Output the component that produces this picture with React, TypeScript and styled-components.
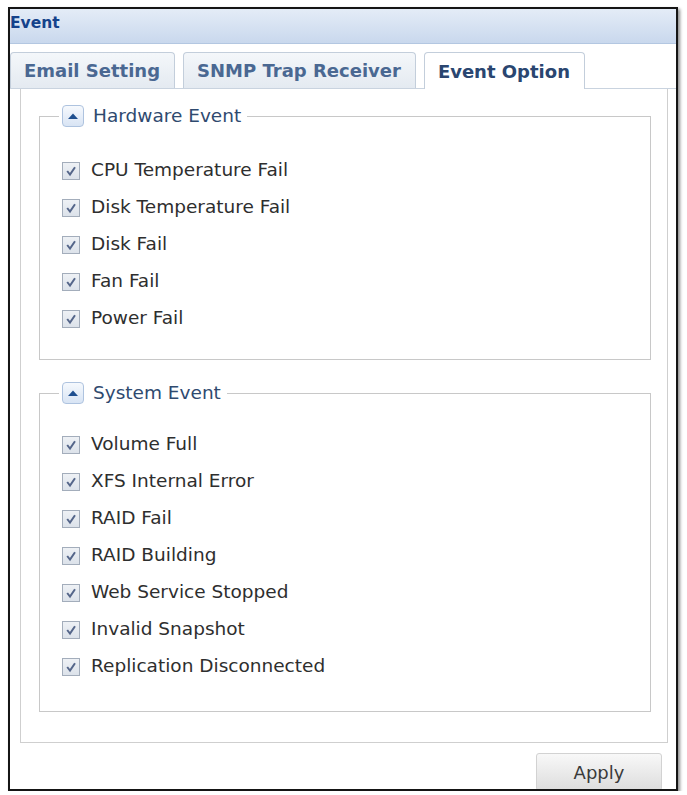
import * as React from "react";
import styled, { createGlobalStyle } from "styled-components";

const GlobalStyle = createGlobalStyle`
  *, *::before, *::after {
    box-sizing: border-box;
  }
  html, body {
    margin: 0;
    padding: 0;
    background: #ffffff;
  }
`;

const Window = styled.div`
  margin: 7px 0 0 8px;
  width: 670px;
  height: 784px;
  border: 2px solid #151515;
  box-shadow: 2px 2px 3px rgba(0, 0, 0, 0.45);
  background: #ffffff;
  display: flex;
  flex-direction: column;
  overflow: hidden;
  font-family: "DejaVu Sans", Verdana, sans-serif;
`;

const TitleBar = styled.div`
  height: 35px;
  flex: none;
  padding: 4px 0 0 0;
  line-height: 20px;
  font-size: 15.5px;
  font-weight: bold;
  color: #15428b;
  background: linear-gradient(#e4ecf7, #c9d8ed);
  border-bottom: 1px solid #b3c7e1;
`;

const TabStrip = styled.div`
  flex: none;
  display: flex;
  align-items: flex-end;
  gap: 8px;
  height: 45px;
  border-bottom: 1px solid #c9d3df;
`;

const Tab = styled.div<{ $active?: boolean }>`
  display: flex;
  align-items: center;
  padding: 0 14px 0 13px;
  font-size: 18px;
  font-weight: bold;
  color: ${(p) => (p.$active ? "#2a4670" : "#4a6892")};
  background: ${(p) =>
    p.$active ? "#ffffff" : "linear-gradient(#f4f7fa, #e4eaf1)"};
  border: 1px solid #c3cedb;
  border-bottom: none;
  border-radius: 4px 4px 0 0;
  margin-bottom: ${(p) => (p.$active ? "-1px" : "0")};
  height: ${(p) => (p.$active ? "37px" : "36px")};
`;

const Body = styled.div`
  flex: 1;
  display: flex;
  flex-direction: column;
  padding: 0 8px 0 10px;
`;

const Panel = styled.div`
  flex: none;
  height: 654px;
  border: 1px solid #cfcfcf;
  border-top: none;
  padding: 16px 16px 0 18px;
  display: flex;
  flex-direction: column;
  gap: 22px;
`;

const Group = styled.fieldset<{ $height: number; $top: number }>`
  margin: 0;
  min-width: 0;
  height: ${(p) => p.$height}px;
  border: 1px solid #c8c8c8;
  padding: ${(p) => p.$top}px 0 0 22px;
  display: flex;
  flex-direction: column;
  gap: 15px;
`;

const Legend = styled.legend`
  margin-left: -3px;
  padding: 0 6px 0 3px;
  display: flex;
  align-items: center;
  gap: 9px;
  font-size: 18.5px;
  line-height: 22px;
  color: #2f4a6f;
`;

const Toggle = styled.span`
  width: 22px;
  height: 22px;
  border: 1px solid #aec3df;
  border-radius: 4px;
  background: linear-gradient(#f6f9fd, #d8e4f4);
  display: flex;
  align-items: center;
  justify-content: center;
`;

const Row = styled.label`
  display: flex;
  align-items: center;
  gap: 11px;
  height: 22px;
  font-size: 18.5px;
  color: #2e2e2e;
`;

const Box = styled.span`
  flex: none;
  width: 18px;
  height: 18px;
  margin-top: 3px;
  border: 1px solid #a3adbb;
  background: linear-gradient(#eef1f5, #dce2ea);
  display: flex;
  align-items: center;
  justify-content: center;
`;

const Footer = styled.div`
  display: flex;
  justify-content: flex-end;
  padding: 10px 6px 0 0;
`;

const Button = styled.button`
  width: 126px;
  height: 38px;
  font-family: "DejaVu Sans", Verdana, sans-serif;
  font-size: 18px;
  color: #3a3a3a;
  border: 1px solid #d2d2d2;
  border-radius: 3px;
  background: linear-gradient(#f8f8f8, #dddddd);
  padding: 0;
`;

const Check = () => (
  <Box>
    <svg width="12" height="12" viewBox="0 0 12 12">
      <path
        d="M2.2 6 L5 9.5 L10 2.2"
        fill="none"
        stroke="#55668a"
        strokeWidth="2"
      />
    </svg>
  </Box>
);

const hardware = [
  "CPU Temperature Fail",
  "Disk Temperature Fail",
  "Disk Fail",
  "Fan Fail",
  "Power Fail",
];

const system = [
  "Volume Full",
  "XFS Internal Error",
  "RAID Fail",
  "RAID Building",
  "Web Service Stopped",
  "Invalid Snapshot",
  "Replication Disconnected",
];

const EventGroup: React.FC<{
  title: string;
  items: string[];
  height: number;
  top: number;
}> = ({ title, items, height, top }) => (
  <Group $height={height} $top={top}>
    <Legend>
      <Toggle>
        <svg width="10" height="6" viewBox="0 0 10 6">
          <path d="M0 6 L5 0.5 L10 6 Z" fill="#1f4f8f" />
        </svg>
      </Toggle>
      {title}
    </Legend>
    {items.map((item) => (
      <Row key={item}>
        <Check />
        {item}
      </Row>
    ))}
  </Group>
);

const App: React.FC = () => {
  return (
    <>
      <GlobalStyle />
      <Window>
        <TitleBar>Event</TitleBar>
        <TabStrip>
          <Tab>Email Setting</Tab>
          <Tab>SNMP Trap Receiver</Tab>
          <Tab $active>Event Option</Tab>
        </TabStrip>
        <Body>
          <Panel>
            <EventGroup
              title="Hardware Event"
              items={hardware}
              height={255}
              top={31}
            />
            <EventGroup
              title="System Event"
              items={system}
              height={330}
              top={28}
            />
          </Panel>
          <Footer>
            <Button>Apply</Button>
          </Footer>
        </Body>
      </Window>
    </>
  );
};

export default App;
